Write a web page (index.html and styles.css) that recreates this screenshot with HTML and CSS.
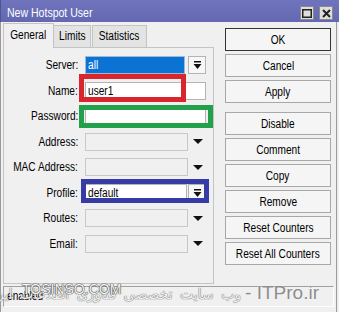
FILE: index.html
```html
<!DOCTYPE html>
<html lang="en">
<head>
    <meta charset="UTF-8">
    <title>New Hotspot User</title>
    <link rel="stylesheet" href="styles.css">
</head>
<body>
    <div class="window">
        <div class="titlebar">
            <span class="title"><span class="t">New Hotspot User</span></span>
            <div class="title-buttons">
                <span class="tbtn">
                    <svg width="10" height="9" viewBox="0 0 10 9"><rect x="0.75" y="0.75" width="8.5" height="7.5" fill="none" stroke="#222" stroke-width="1.5"/></svg>
                </span>
                <span class="tbtn">
                    <svg width="9" height="9" viewBox="0 0 9 9"><path d="M1 1 L8 8 M8 1 L1 8" stroke="#222" stroke-width="2"/></svg>
                </span>
            </div>
        </div>

        <div class="client">
            <div class="main">
                <div class="tabs-area">
                    <div class="tabs">
                        <div class="tab active"><span class="t">General</span></div>
                        <div class="tab tab-limits"><span class="t">Limits</span></div>
                        <div class="tab tab-stats"><span class="t">Statistics</span></div>
                    </div>
                    <div class="panel">
                        <div class="form">
                            <label><span class="t">Server:</span></label>
                            <div class="field-wrap">
                                <div class="field selected"><span class="t">all</span></div>
                                <span class="drop-btn">
                                    <svg width="9" height="8" viewBox="0 0 9 8"><rect x="1" y="0" width="7" height="1.5" fill="#111"/><polygon points="0.5,3 8.5,3 4.5,8" fill="#111"/></svg>
                                </span>
                            </div>

                            <label><span class="t">Name:</span></label>
                            <div class="field-wrap">
                                <div class="field wide"><span class="t">user1</span></div>
                            </div>

                            <label><span class="t">Password:</span></label>
                            <div class="field-wrap">
                                <div class="field wide"></div>
                            </div>

                            <label><span class="t">Address:</span></label>
                            <div class="field-wrap">
                                <div class="field disabled"></div>
                                <span class="arrow"></span>
                            </div>

                            <label><span class="t">MAC Address:</span></label>
                            <div class="field-wrap">
                                <div class="field disabled"></div>
                                <span class="arrow"></span>
                            </div>

                            <label><span class="t">Profile:</span></label>
                            <div class="field-wrap">
                                <div class="field profile"><span class="t">default</span></div>
                                <span class="drop-btn">
                                    <svg width="9" height="8" viewBox="0 0 9 8"><rect x="1" y="0" width="7" height="1.5" fill="#111"/><polygon points="0.5,3 8.5,3 4.5,8" fill="#111"/></svg>
                                </span>
                            </div>

                            <label><span class="t">Routes:</span></label>
                            <div class="field-wrap">
                                <div class="field disabled"></div>
                                <span class="arrow"></span>
                            </div>

                            <label><span class="t">Email:</span></label>
                            <div class="field-wrap">
                                <div class="field disabled"></div>
                                <span class="arrow"></span>
                            </div>
                        </div>

                        <!-- highlight frames drawn over the form -->
                        <div class="mark mark-red"></div>
                        <div class="mark mark-green"></div>
                        <div class="mark mark-blue"></div>
                    </div>
                </div>

                <div class="buttons">
                    <div class="btn default"><span class="t">OK</span></div>
                    <div class="btn"><span class="t">Cancel</span></div>
                    <div class="btn"><span class="t">Apply</span></div>
                    <div class="btn group-start"><span class="t">Disable</span></div>
                    <div class="btn"><span class="t">Comment</span></div>
                    <div class="btn"><span class="t">Copy</span></div>
                    <div class="btn"><span class="t">Remove</span></div>
                    <div class="btn"><span class="t">Reset Counters</span></div>
                    <div class="btn"><span class="t">Reset All Counters</span></div>
                </div>
            </div>

            <div class="statusbar"><span class="t">enabled</span></div>

            <div class="wm-right">
                <span class="wm-fa" dir="rtl">وب سایت تخصصی فناوری اطلاعات ایران</span>
                <span class="wm-site">- ITPro.ir</span>
            </div>
            <div class="wm-left">TOSINSO.COM</div>
        </div>
    </div>
</body>
</html>
```

FILE: styles.css
```css
body {
    margin: 0;
    font-family: "Liberation Sans", Arial, sans-serif;
    font-size: 12.5px;
    color: #000;
    background: #f0f0f0;
}

/* the dialog font is a narrow one, so text runs are squeezed */
.t {
    display: inline-block;
    white-space: nowrap;
    transform: scaleX(0.81);
    transform-origin: left center;
}

.window {
    width: 339px;
    height: 312px;
    background: #f0f0f0;
    overflow: hidden;
}

.titlebar {
    height: 22px;
    display: flex;
    justify-content: space-between;
    background: linear-gradient(#7074bc, #6468b2);
    border-left: 1px solid #50548f;
}

.title {
    color: #fff;
    font-size: 13px;
    padding: 5px 0 0 6px;
    line-height: 16px;
}

.title-buttons {
    display: flex;
    gap: 5px;
    padding: 6px 6px 0 0;
}

.tbtn {
    width: 12px;
    height: 12px;
    background: #dedede;
    border: 1px solid #8a8a8a;
    display: flex;
    align-items: center;
    justify-content: center;
}

.client {
    position: relative;
    width: 335px;
    height: 290px;
    border-left: 1px solid #9a9a9a;
    border-right: 1px solid #9a9a9a;
}

.main {
    display: flex;
    padding-left: 2px;
}

.tabs-area {
    width: 211px;
    padding-top: 3px;
}

.tabs {
    display: flex;
    align-items: flex-end;
    height: 22px;
}

.tab {
    box-sizing: border-box;
    height: 22px;
    border: 1px solid #c4c4c4;
    border-bottom: none;
    background: #e3e3e3;
    display: flex;
    justify-content: center;
    line-height: 20px;
}

.tab .t {
    transform-origin: center;
}

.tab.active {
    width: 51px;
    height: 25px;
    margin-bottom: -1px;
    background: #f0f0f0;
    position: relative;
    z-index: 1;
    line-height: 22px;
}

.tab-limits {
    width: 37px;
    border-left: none;
}

.tab-stats {
    width: 55px;
    margin-left: 1px;
}

.panel {
    position: relative;
    box-sizing: border-box;
    height: 237px;
    border: 1px solid #c4c4c4;
    background: #f0f0f0;
    padding-top: 8px;
}

.form {
    display: grid;
    grid-template-columns: 74px 1fr;
    column-gap: 7px;
    row-gap: 7.5px;
}

.form label {
    display: flex;
    justify-content: flex-end;
    line-height: 18px;
    height: 18px;
}

.form label .t {
    transform-origin: right center;
}

.field-wrap {
    display: flex;
    align-items: center;
    height: 18px;
}

.field {
    box-sizing: border-box;
    height: 18px;
    border: 1px solid #b4b4b4;
    background: #fff;
    padding-left: 2px;
    line-height: 16px;
}

.field.selected {
    width: 100px;
    background: #0a73d4;
    border-color: #9fb8d8;
    color: #fff;
}

.field.wide {
    width: 121px;
}

.field.disabled {
    width: 103px;
    background: #f0f0f0;
    border-color: #c8c8c8;
}

.field.profile {
    width: 102px;
}

.drop-btn {
    box-sizing: border-box;
    width: 18px;
    height: 18px;
    margin-left: 3px;
    border: 1px solid #b4b4b4;
    background: #f7f7f7;
    display: flex;
    align-items: center;
    justify-content: center;
}

.field.profile + .drop-btn {
    margin-left: 1px;
}

.arrow {
    width: 0;
    height: 0;
    margin-left: 5px;
    border-left: 5px solid transparent;
    border-right: 5px solid transparent;
    border-top: 5px solid #111;
}

.mark {
    position: absolute;
    box-sizing: border-box;
    border: 5px solid;
}

.mark-red {
    left: 75px;
    top: 26px;
    width: 107px;
    height: 28px;
    border-color: #d8262c;
}

.mark-green {
    left: 75px;
    top: 57px;
    width: 134px;
    height: 23px;
    border-color: #22a04b;
}

.mark-blue {
    left: 77px;
    top: 131px;
    width: 128px;
    height: 24px;
    border-color: #363ba6;
}

.buttons {
    display: flex;
    flex-direction: column;
    gap: 3px;
    width: 106px;
    margin-left: 11px;
    padding-top: 6px;
}

.btn {
    box-sizing: border-box;
    height: 23px;
    border: 1px solid #a8a8a8;
    background: #f5f5f5;
    display: flex;
    align-items: center;
    justify-content: center;
}

.btn .t {
    transform-origin: center;
}

.btn.default {
    border-color: #333;
}

.btn.group-start {
    margin-top: 6px;
}

.statusbar {
    box-sizing: border-box;
    width: 331px;
    height: 21px;
    margin: 2px 0 0 2px;
    border: 1px solid;
    border-color: #a0a0a0 #fff #fff #a0a0a0;
    padding-left: 3px;
    line-height: 19px;
}

.wm-left {
    position: absolute;
    left: 21px;
    top: 259px;
    font-size: 14px;
    white-space: nowrap;
    color: #f4f4f4;
    text-shadow: 0 0 1px #444, 0 0 1px #444, 0 0 1px #444;
}

.wm-right {
    position: absolute;
    right: 17px;
    top: 260px;
    display: flex;
    align-items: baseline;
    gap: 4px;
    white-space: nowrap;
}

.wm-fa {
    font-family: "DejaVu Sans", sans-serif;
    font-size: 14px;
    word-spacing: 3px;
    color: #f0f0f0;
    text-shadow: 0 0 1px #666, 0 0 1px #666;
}

.wm-site {
    font-size: 19px;
    color: #8c8c8c;
    text-shadow: 0 0 1px #fff;
}
```
